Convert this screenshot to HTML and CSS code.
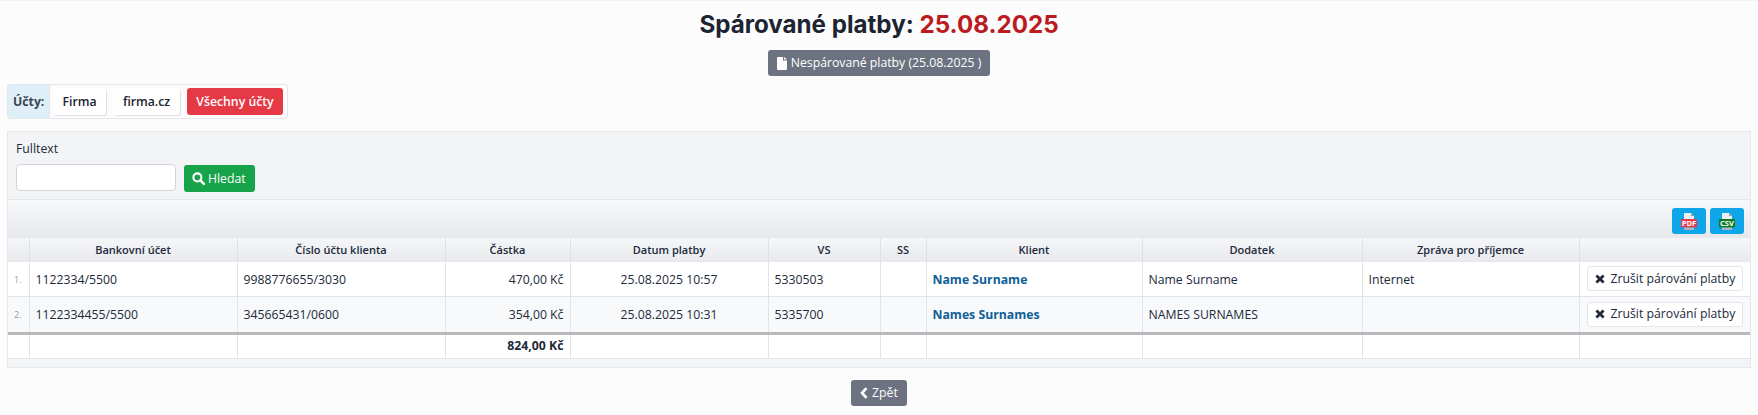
FILE: index.html
```html
<!DOCTYPE html>
<html lang="cs">
<head>
<meta charset="utf-8">
<title>Spárované platby</title>
<link rel="stylesheet" href="styles.css">
</head>
<body>
<h1 class="title">Spárované platby: <span class="title-date">25.08.2025</span></h1>
<div class="center-row">
  <a class="btn btn-gray" href="#">
    <svg class="ico" viewBox="0 0 10 13" width="10" height="13"><path fill="#fff" d="M0 1a1 1 0 0 1 1-1h5v3.5h4V12a1 1 0 0 1-1 1H1a1 1 0 0 1-1-1zM7 0l3 2.6H7z"/></svg>
    Nespárované platby (25.08.2025 )
  </a>
</div>
<div class="accounts">
  <span class="accounts-label">Účty:</span>
  <a class="acc acc-a" href="#">Firma</a>
  <a class="acc acc-b" href="#">firma.cz</a>
  <a class="acc acc-all" href="#">Všechny účty</a>
</div>
<section class="panel">
  <form class="filter">
    <label class="filter-label" for="q">Fulltext</label>
    <div class="filter-row">
      <input id="q" class="filter-input" type="text">
      <button class="btn btn-green" type="button">
        <svg class="ico" viewBox="0 0 14 14" width="13" height="13"><circle cx="5.8" cy="5.8" r="4.3" fill="none" stroke="#fff" stroke-width="2.2"/><path d="M9 9l3.8 3.8" stroke="#fff" stroke-width="2.6" stroke-linecap="round"/></svg>
        Hledat
      </button>
    </div>
  </form>
  <div class="toolbar">
    <a class="tool" href="#">
      <svg viewBox="0 0 16 17" width="16" height="17"><path fill="#eceef1" d="M3 0h7l3 3v4H3z"/><path fill="#8f98a3" d="M10 0l3 3h-3z"/><rect y="6" width="16" height="8.5" rx="1" fill="#e63950"/><path fill="#aeb4bf" d="M3 14.5h10V17H3z"/><text x="8" y="13" class="tool-txt">PDF</text></svg>
    </a>
    <a class="tool" href="#">
      <svg viewBox="0 0 16 17" width="16" height="17"><path fill="#eceef1" d="M3 0h7l3 3v4H3z"/><path fill="#8f98a3" d="M10 0l3 3h-3z"/><rect y="6" width="16" height="8.5" rx="1" fill="#0b7a1f"/><path fill="#aeb4bf" d="M3 14.5h10V17H3z"/><text x="8" y="13" class="tool-txt">CSV</text></svg>
    </a>
  </div>
  <table class="grid">
    <colgroup>
      <col class="c0"><col class="c1"><col class="c2"><col class="c3"><col class="c4"><col class="c5"><col class="c6"><col class="c7"><col class="c8"><col class="c9"><col class="c10">
    </colgroup>
    <thead>
      <tr>
        <th></th><th>Bankovní účet</th><th>Číslo účtu klienta</th><th>Částka</th><th>Datum platby</th><th>VS</th><th>SS</th><th>Klient</th><th>Dodatek</th><th>Zpráva pro příjemce</th><th></th>
      </tr>
    </thead>
    <tbody>
      <tr class="first">
        <td class="num">1.</td><td>1122334/5500</td><td>9988776655/3030</td><td class="right">470,00 Kč</td><td class="mid">25.08.2025 10:57</td><td>5330503</td><td></td><td><a class="client" href="#">Name Surname</a></td><td>Name Surname</td><td>Internet</td>
        <td class="act"><a class="btn-cancel" href="#"><svg viewBox="0 0 10 10" width="10" height="10"><path d="M1.4 1.4l7.2 7.2M8.6 1.4l-7.2 7.2" stroke="#212a3a" stroke-width="2.8"/></svg>Zrušit párování platby</a></td>
      </tr>
      <tr class="alt">
        <td class="num">2.</td><td>1122334455/5500</td><td>345665431/0600</td><td class="right">354,00 Kč</td><td class="mid">25.08.2025 10:31</td><td>5335700</td><td></td><td><a class="client" href="#">Names Surnames</a></td><td>NAMES SURNAMES</td><td></td>
        <td class="act"><a class="btn-cancel" href="#"><svg viewBox="0 0 10 10" width="10" height="10"><path d="M1.4 1.4l7.2 7.2M8.6 1.4l-7.2 7.2" stroke="#212a3a" stroke-width="2.8"/></svg>Zrušit párování platby</a></td>
      </tr>
    </tbody>
    <tfoot>
      <tr>
        <td></td><td></td><td></td><td class="right total">824,00 Kč</td><td></td><td></td><td></td><td></td><td></td><td></td><td></td>
      </tr>
    </tfoot>
  </table>
</section>
<div class="center-row back-row">
  <a class="btn btn-gray" href="#">
    <svg class="ico" viewBox="0 0 8 12" width="8" height="12"><path d="M6.5 1.2L2 6l4.5 4.8" fill="none" stroke="#fff" stroke-width="2.6"/></svg>
    Zpět
  </a>
</div>
</body>
</html>
```
FILE: styles.css
```css
* { box-sizing: border-box; }
html, body { height: 100%; }
body {
  margin: 0;
  padding: 0 7px;
  overflow: hidden;
  background: #fcfcfd;
  border-top: 1px solid #f3f4f6;
  color: #212a3a;
  font: 12.25px/18px "Open Sans", sans-serif;
}
a { text-decoration: none; color: inherit; }
.title {
  margin: 0;
  padding-top: 8px;
  height: 49px;
  text-align: center;
  font: 700 24.15px/32px Inter, "Open Sans", sans-serif;
  color: #1b2430;
}
.title-date { color: #bb1a1f; }
.center-row { display: flex; justify-content: center; }
.btn {
  display: inline-flex;
  align-items: center;
  gap: 4px;
  height: 26px;
  padding: 0 9px;
  border: 0;
  border-radius: 3px;
  color: #fff;
  font: 12.25px/18px "Open Sans", sans-serif;
}
.btn-gray { background: #6c7280; }
.btn-green { background: #17a34a; padding: 0 9px 0 8px; height: 27px; gap: 3px; margin-top: 1px; }
.ico { flex: none; }
.accounts {
  display: inline-flex;
  align-items: center;
  gap: 7px;
  width: 281px;
  height: 35px;
  margin-top: 8px;
  padding-right: 4px;
  border: 1px solid #e4e6ea;
  border-radius: 3px;
  vertical-align: top;
  font-weight: 600;
}
.accounts-label {
  align-self: stretch;
  display: flex;
  align-items: center;
  width: 42px;
  padding-left: 5px;
  margin-right: -4px;
  background: #dfeff8;
  color: #3a4350;
  font-weight: 700;
  border-right: 1px solid #e4e6ea;
  border-radius: 3px 0 0 3px;
}
.acc {
  display: flex;
  align-items: center;
  justify-content: center;
  height: 27px;
  background: #fff;
  border-radius: 3px;
  box-shadow: 1px 1px 1px #dcdfe4;
  color: #1b2430;
}
.acc-a { width: 53px; }
.acc-b { width: 67px; }
.acc-all { background: #e63946; color: #fff; box-shadow: none; flex: 1; }
.panel {
  display: block;
  width: 1744px;
  height: 237px;
  margin-top: 12px;
  background: #f3f4f6;
  border: 1px solid #e6e8ec;
}
.filter { height: 67px; padding: 6px 8px 0; }
.filter-label { display: block; height: 26px; line-height: 18px; padding-top: 2px; }
.filter-row { display: flex; align-items: flex-start; gap: 8px; }
.filter-input {
  width: 160px;
  height: 27px;
  background: #fff;
  border: 1px solid #d1d4da;
  border-radius: 4px;
}
.toolbar {
  display: flex;
  justify-content: flex-end;
  align-items: center;
  gap: 4px;
  height: 39px;
  padding: 4px 6px 0 0;
  border-top: 1px solid #e4e6ea;
  background: linear-gradient(#f7f8fa, #e6e8ec);
}
.tool {
  display: flex;
  align-items: center;
  justify-content: center;
  width: 34px;
  height: 26px;
  background: #0ea5e9;
  border-radius: 3px;
}
.tool-txt {
  fill: #fff;
  font: 700 7.6px "Open Sans", sans-serif;
  text-anchor: middle;
}
.grid {
  width: 100%;
  table-layout: fixed;
  border-collapse: collapse;
}
.c0 { width: 21px; } .c1 { width: 208px; } .c2 { width: 208px; } .c3 { width: 125px; }
.c4 { width: 198px; } .c5 { width: 112px; } .c6 { width: 46px; } .c7 { width: 216px; }
.c8 { width: 220px; } .c9 { width: 217px; } .c10 { width: 171px; }
.grid th {
  height: 24px;
  padding: 0;
  font-size: 11.03px;
  font-weight: 600;
  text-align: center;
  background: linear-gradient(#f5f6f8, #e7e9ed);
  border-left: 1px solid #dfe1e6;
}
.grid td {
  height: 35px;
  padding: 1px 6px 0;
  background: #fff;
  border: 1px solid #e2e4e8;
  white-space: nowrap;
}
.grid th:first-child, .grid td:first-child { border-left: 0; }
.grid th:last-child, .grid td:last-child { border-right: 0; }
.grid .first td { height: 34px; padding-top: 2px; border-top: 0; }
.grid .alt td { background: #f8f9fb; }
.grid tbody tr:last-child td { border-bottom: 3px solid #b9b9bb; height: 37px; }
.grid tfoot td { height: 25px; padding-top: 0; border-top: 0; }
.grid .num { padding-left: 6px; padding-right: 0; font-size: 9px; color: #9a9a9a; }
.right { text-align: right; }
.mid { text-align: center; }
.total { font-weight: 700; }
.client { color: #0f5f96; font-weight: 700; }
.grid .act, .grid .first .act { padding: 0 7px; }
.btn-cancel {
  display: flex;
  align-items: center;
  gap: 6px;
  height: 25px;
  padding: 0 0 0 7px;
  background: #fff;
  border: 1px solid #e4e6ea;
  border-radius: 3px;
  color: #212a3a;
}
.back-row { margin-top: 12px; }
```
